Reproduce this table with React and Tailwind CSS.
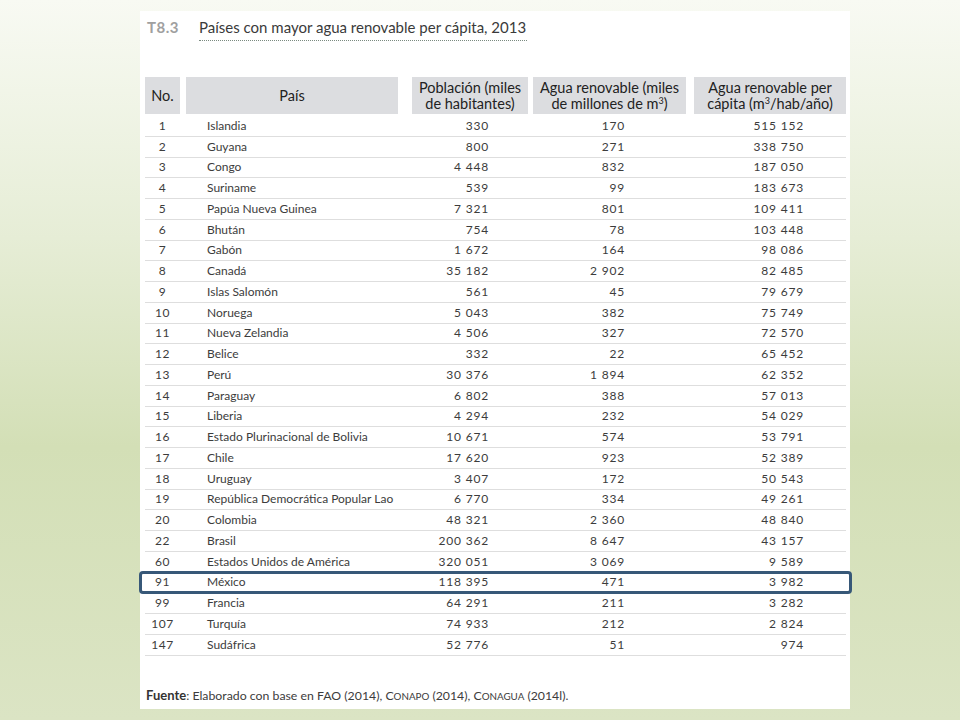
import React from "react";

const rows = [
  ["1", "Islandia", "330", "170", "515 152"],
  ["2", "Guyana", "800", "271", "338 750"],
  ["3", "Congo", "4 448", "832", "187 050"],
  ["4", "Suriname", "539", "99", "183 673"],
  ["5", "Papúa Nueva Guinea", "7 321", "801", "109 411"],
  ["6", "Bhután", "754", "78", "103 448"],
  ["7", "Gabón", "1 672", "164", "98 086"],
  ["8", "Canadá", "35 182", "2 902", "82 485"],
  ["9", "Islas Salomón", "561", "45", "79 679"],
  ["10", "Noruega", "5 043", "382", "75 749"],
  ["11", "Nueva Zelandia", "4 506", "327", "72 570"],
  ["12", "Belice", "332", "22", "65 452"],
  ["13", "Perú", "30 376", "1 894", "62 352"],
  ["14", "Paraguay", "6 802", "388", "57 013"],
  ["15", "Liberia", "4 294", "232", "54 029"],
  ["16", "Estado Plurinacional de Bolivia", "10 671", "574", "53 791"],
  ["17", "Chile", "17 620", "923", "52 389"],
  ["18", "Uruguay", "3 407", "172", "50 543"],
  ["19", "República Democrática Popular Lao", "6 770", "334", "49 261"],
  ["20", "Colombia", "48 321", "2 360", "48 840"],
  ["22", "Brasil", "200 362", "8 647", "43 157"],
  ["60", "Estados Unidos de América", "320 051", "3 069", "9 589"],
  ["91", "México", "118 395", "471", "3 982"],
  ["99", "Francia", "64 291", "211", "3 282"],
  ["107", "Turquía", "74 933", "212", "2 824"],
  ["147", "Sudáfrica", "52 776", "51", "974"],
];

export default function App() {
  return (
    <div
      className="w-[960px] h-[720px] overflow-hidden bg-[linear-gradient(to_bottom,#f8faf3_0%,#e6edd6_33%,#d3dfb6_62%,#dbe4c4_100%)] pt-[11px] pl-[140px]"
      style={{ fontFamily: "Lato, 'Open Sans', sans-serif" }}
    >
      <div className="w-[710px] h-[698px] bg-white pl-[5px] flex flex-col">
        {/* Title */}
        <div className="flex items-start pt-[7px] h-[66px]">
          <div className="w-[54px] pl-[2px] text-[15px] font-bold text-[#a0a0a0] leading-[18px] tracking-[0.5px]">
            T8.3
          </div>
          <div className="flex flex-col">
            <div className="text-[15px] text-[#3a3a3a] leading-[18px]">
              Países con mayor agua renovable per cápita, 2013
            </div>
            <div className="mt-[4px] w-[328px] border-b border-dotted border-[#7a8a80]"></div>
          </div>
        </div>

        {/* Header */}
        <div className="flex h-[37px] text-[14.5px] leading-[16px] text-[#222]">
          <div className="w-[35px] bg-[#dcdde0] flex items-center justify-center">
            <span>No.</span>
          </div>
          <div className="ml-[6px] w-[212px] bg-[#dcdde0] flex items-center justify-center">
            <span>País</span>
          </div>
          <div className="ml-[14px] w-[116px] bg-[#dcdde0] flex items-center justify-center text-center">
            <span>
              Población (miles
              <br />
              de habitantes)
            </span>
          </div>
          <div className="ml-[5px] w-[153px] bg-[#dcdde0] flex items-center justify-center text-center">
            <span>
              Agua renovable (miles
              <br />
              de millones de m<span className="text-[9px] relative -top-[5px] leading-none">3</span>)
            </span>
          </div>
          <div className="ml-[8px] w-[152px] bg-[#dcdde0] flex items-center justify-center text-center">
            <span>
              Agua renovable per
              <br />
              cápita (m<span className="text-[9px] relative -top-[5px] leading-none">3</span>/hab/año)
            </span>
          </div>
        </div>

        {/* Rows */}
        <div className="flex flex-col w-[701px] mt-[2px]">
          {rows.map((r) => (
            <div
              key={r[0]}
              className="relative flex h-[20.75px] items-center border-b border-[#dedede] text-[12px] text-[#3c3c3c]"
            >
              <div className="w-[35px] text-center tracking-[0.6px]">{r[0]}</div>
              <div className="ml-[6px] w-[212px] pl-[21px] whitespace-nowrap">{r[1]}</div>
              <div className="ml-[14px] w-[116px] pr-[39px] text-right tracking-[0.8px]">{r[2]}</div>
              <div className="ml-[5px] w-[153px] pr-[61px] text-right tracking-[0.8px]">{r[3]}</div>
              <div className="ml-[8px] w-[152px] pr-[42px] text-right tracking-[0.8px]">{r[4]}</div>
              {r[0] === "91" && (
                <div className="absolute left-[-6px] right-[-6px] top-[-2px] bottom-[-2px] border-[3px] border-[#375878] rounded-[4px]"></div>
              )}
            </div>
          ))}
        </div>

        {/* Fuente */}
        <div className="mt-[31px] text-[12.3px] text-[#3c3c3c] leading-[16px] pl-[1px]">
          <span className="font-bold text-[13px] text-[#333]">Fuente</span>: Elaborado con base en FAO (2014),{" "}
          C<span className="text-[9.8px]">ONAPO</span> (2014), C<span className="text-[9.8px]">ONAGUA</span> (2014l).
        </div>
      </div>
    </div>
  );
}
